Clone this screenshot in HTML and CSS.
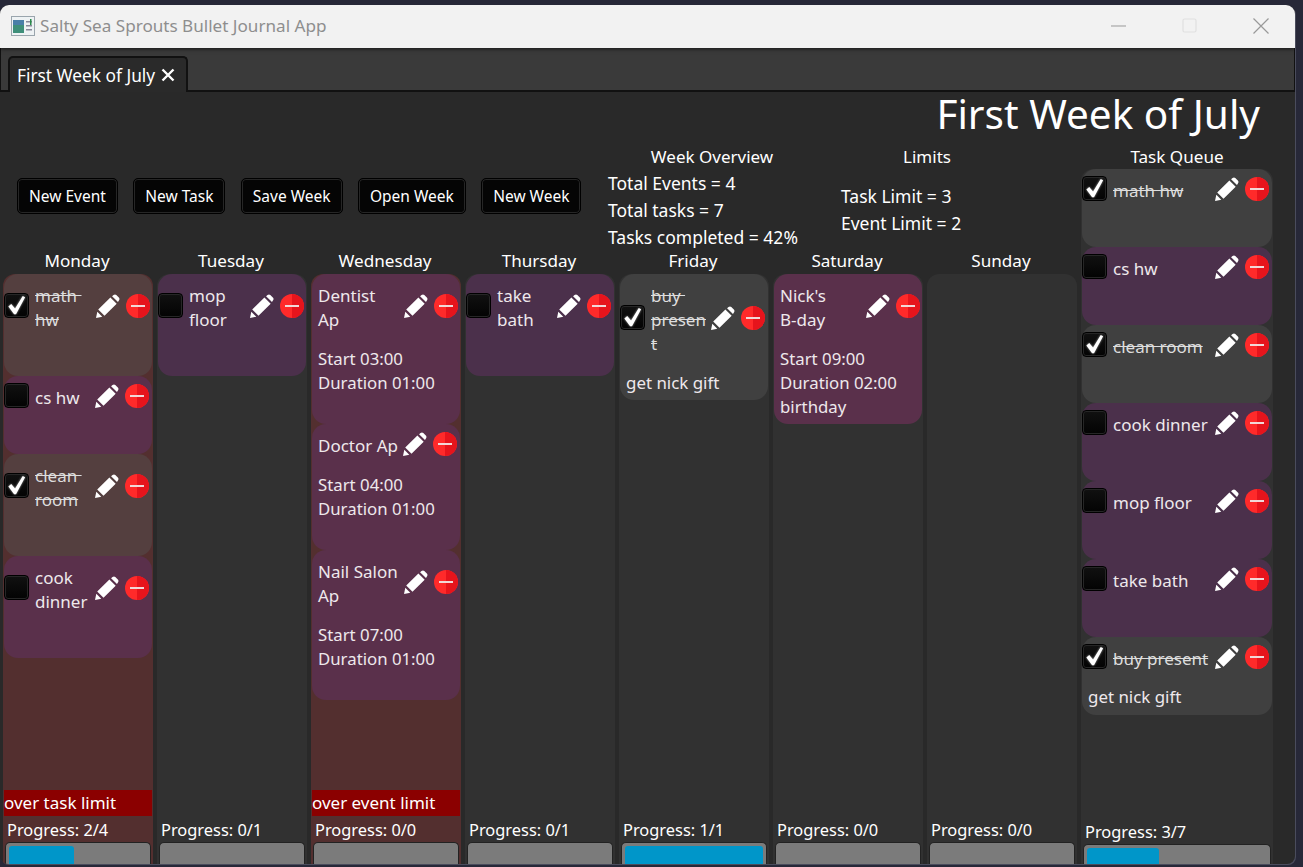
FILE: index.html
```html
<!DOCTYPE html>
<html lang="en">
<head>
<meta charset="utf-8">
<title>Salty Sea Sprouts Bullet Journal App</title>
<link rel="stylesheet" href="styles.css">
</head>
<body>
<svg class="defs" width="0" height="0" aria-hidden="true">
  <defs>
    <symbol id="pencil" viewBox="0 0 26 26">
      <path d="M0 26 L1.4 19.2 L6.8 24.6 Z M2.4 16.8 L15.6 3.8 L22.4 10.6 L9.2 23.6 Z M17.4 2.4 L19 1 Q20.6 0 22 1 L25 4 Q26 5.3 25 6.8 L23.8 8.8 Z" fill="#fff"/>
    </symbol>
    <symbol id="minus" viewBox="0 0 24 24">
      <circle cx="12" cy="12" r="12" fill="#ff2a2a"/>
      <path d="M12 0 A12 12 0 0 1 12 24 Z" fill="#e6141c"/>
      <rect x="5" y="11" width="14" height="2" fill="#f1d8d8"/>
    </symbol>
    <symbol id="tick" viewBox="0 0 24 24">
      <path d="M3.5 13 L6.5 10.5 L10.5 15 L18.5 2 L21 3.5 L11.5 21 L9.5 21 Z" fill="#fff"/>
    </symbol>
  </defs>
</svg>
<div class="window">
  <header class="titlebar">
    <svg class="appicon" width="24" height="20" viewBox="0 0 24 20"><rect x=".5" y=".5" width="23" height="19" fill="#eef2f4" stroke="#9aa5ad"/><rect x="2" y="4" width="11" height="13" fill="#3f8f7a"/><rect x="2" y="4" width="11" height="5" fill="#4a7fa8"/><rect x="15" y="5" width="6" height="1.5" fill="#889"/><rect x="15" y="9" width="6" height="1.5" fill="#889"/><rect x="15" y="13" width="6" height="1.5" fill="#889"/><rect x="19" y="3" width="1.5" height="6" fill="#2a8a4a"/></svg>
    <span class="title">Salty Sea Sprouts Bullet Journal App</span>
    <div class="winbtns">
      <svg class="winbtn" width="16" height="16" viewBox="0 0 16 16"><path d="M0 8H15" stroke="#999" stroke-width="1"/></svg>
      <svg class="winbtn" width="16" height="16" viewBox="0 0 16 16"><rect x="1" y="1" width="13" height="13" rx="1.5" fill="none" stroke="#e0e0e0" stroke-width="1.2"/></svg>
      <svg class="winbtn" width="16" height="16" viewBox="0 0 16 16"><path d="M0.5 0.5L15.5 15.5M15.5 0.5L0.5 15.5" stroke="#999" stroke-width="1.2"/></svg>
    </div>
  </header>
  <div class="tabbar">
    <div class="tab"><span>First Week of July</span><svg class="tabclose" width="14" height="14" viewBox="0 0 14 14"><path d="M1.5 1.5L12.5 12.5M12.5 1.5L1.5 12.5" stroke="#fff" stroke-width="2.4"/></svg></div>
  </div>
  <main class="content">
    <h1 class="pagetitle">First Week of July</h1>
    <section class="controls">
      <div class="buttons">
        <button class="btn">New Event</button>
        <button class="btn">New Task</button>
        <button class="btn">Save Week</button>
        <button class="btn">Open Week</button>
        <button class="btn">New Week</button>
      </div>
      <div class="overview">
        <div class="ovtitle">Week Overview</div>
        <div class="ovline">Total Events = 4</div>
        <div class="ovline">Total tasks = 7</div>
        <div class="ovline">Tasks completed = 42%</div>
      </div>
      <div class="limits">
        <div class="limtitle">Limits</div>
        <div class="ovline">Task Limit = 3</div>
        <div class="ovline">Event Limit = 2</div>
      </div>
    </section>
    <section class="board">
      <div class="daywrap">
        <div class="dayname">Monday</div>
        <div class="day over">
          <div class="items">
            <div class="card done h102 p2"><div class="row"><span class="check"><svg class="tick"><use href="#tick"/></svg></span><span class="ctext strike">math&nbsp;<br>hw</span><svg class="pencil"><use href="#pencil"/></svg><svg class="minus"><use href="#minus"/></svg></div></div>
            <div class="card task h78"><div class="row"><span class="check"></span><span class="ctext">cs hw</span><svg class="pencil"><use href="#pencil"/></svg><svg class="minus"><use href="#minus"/></svg></div></div>
            <div class="card done h102"><div class="row"><span class="check"><svg class="tick"><use href="#tick"/></svg></span><span class="ctext strike">clean&nbsp;<br>room</span><svg class="pencil"><use href="#pencil"/></svg><svg class="minus"><use href="#minus"/></svg></div></div>
            <div class="card task h102"><div class="row"><span class="check"></span><span class="ctext">cook<br>dinner</span><svg class="pencil"><use href="#pencil"/></svg><svg class="minus"><use href="#minus"/></svg></div></div>
          </div>
          <div class="warn">over task limit</div>
          <div class="progress">Progress: 2/4</div>
          <div class="bar"><div class="fill" style="width:47%"></div></div>
        </div>
      </div>
      <div class="daywrap">
        <div class="dayname">Tuesday</div>
        <div class="day">
          <div class="items">
            <div class="card task2 h102 p2"><div class="row"><span class="check"></span><span class="ctext">mop<br>floor</span><svg class="pencil"><use href="#pencil"/></svg><svg class="minus"><use href="#minus"/></svg></div></div>
          </div>
          <div class="progress">Progress: 0/1</div>
          <div class="bar"></div>
        </div>
      </div>
      <div class="daywrap">
        <div class="dayname">Wednesday</div>
        <div class="day over">
          <div class="items">
            <div class="card task ev p2"><div class="row"><span class="ctext">Dentist<br>Ap</span><svg class="pencil"><use href="#pencil"/></svg><svg class="minus"><use href="#minus"/></svg></div><div class="evinfo">Start 03:00<br>Duration 01:00</div></div>
            <div class="card task ev one"><div class="row"><span class="ctext">Doctor Ap</span><svg class="pencil"><use href="#pencil"/></svg><svg class="minus"><use href="#minus"/></svg></div><div class="evinfo">Start 04:00<br>Duration 01:00</div></div>
            <div class="card task ev p2"><div class="row"><span class="ctext">Nail Salon<br>Ap</span><svg class="pencil"><use href="#pencil"/></svg><svg class="minus"><use href="#minus"/></svg></div><div class="evinfo">Start 07:00<br>Duration 01:00</div></div>
          </div>
          <div class="warn">over event limit</div>
          <div class="progress">Progress: 0/0</div>
          <div class="bar"></div>
        </div>
      </div>
      <div class="daywrap">
        <div class="dayname">Thursday</div>
        <div class="day">
          <div class="items">
            <div class="card task2 h102"><div class="row"><span class="check"></span><span class="ctext">take<br>bath</span><svg class="pencil"><use href="#pencil"/></svg><svg class="minus"><use href="#minus"/></svg></div></div>
          </div>
          <div class="progress">Progress: 0/1</div>
          <div class="bar"></div>
        </div>
      </div>
      <div class="daywrap">
        <div class="dayname">Friday</div>
        <div class="day">
          <div class="items">
            <div class="card grey"><div class="row"><span class="check"><svg class="tick"><use href="#tick"/></svg></span><span class="ctext strike">buy&nbsp;<br>presen<br>t</span><svg class="pencil"><use href="#pencil"/></svg><svg class="minus"><use href="#minus"/></svg></div><div class="note">get nick gift</div></div>
          </div>
          <div class="progress">Progress: 1/1</div>
          <div class="bar"><div class="fill full"></div></div>
        </div>
      </div>
      <div class="daywrap">
        <div class="dayname">Saturday</div>
        <div class="day">
          <div class="items">
            <div class="card task ev p2"><div class="row"><span class="ctext">Nick's<br>B-day</span><svg class="pencil"><use href="#pencil"/></svg><svg class="minus"><use href="#minus"/></svg></div><div class="evinfo">Start 09:00<br>Duration 02:00<br>birthday</div></div>
          </div>
          <div class="progress">Progress: 0/0</div>
          <div class="bar"></div>
        </div>
      </div>
      <div class="daywrap">
        <div class="dayname">Sunday</div>
        <div class="day">
          <div class="items"></div>
          <div class="progress">Progress: 0/0</div>
          <div class="bar"></div>
        </div>
      </div>
      <div class="daywrap queue">
        <div class="dayname">Task Queue</div>
        <div class="day">
          <div class="items">
            <div class="card grey q"><div class="row"><span class="check"><svg class="tick"><use href="#tick"/></svg></span><span class="ctext strike">math hw</span><svg class="pencil"><use href="#pencil"/></svg><svg class="minus"><use href="#minus"/></svg></div></div>
            <div class="card task2 q"><div class="row"><span class="check"></span><span class="ctext">cs hw</span><svg class="pencil"><use href="#pencil"/></svg><svg class="minus"><use href="#minus"/></svg></div></div>
            <div class="card grey q"><div class="row"><span class="check"><svg class="tick"><use href="#tick"/></svg></span><span class="ctext strike">clean room</span><svg class="pencil"><use href="#pencil"/></svg><svg class="minus"><use href="#minus"/></svg></div></div>
            <div class="card task2 q"><div class="row"><span class="check"></span><span class="ctext">cook dinner</span><svg class="pencil"><use href="#pencil"/></svg><svg class="minus"><use href="#minus"/></svg></div></div>
            <div class="card task2 q"><div class="row"><span class="check"></span><span class="ctext">mop floor</span><svg class="pencil"><use href="#pencil"/></svg><svg class="minus"><use href="#minus"/></svg></div></div>
            <div class="card task2 q"><div class="row"><span class="check"></span><span class="ctext">take bath</span><svg class="pencil"><use href="#pencil"/></svg><svg class="minus"><use href="#minus"/></svg></div></div>
            <div class="card grey q"><div class="row"><span class="check"><svg class="tick"><use href="#tick"/></svg></span><span class="ctext strike">buy present</span><svg class="pencil"><use href="#pencil"/></svg><svg class="minus"><use href="#minus"/></svg></div><div class="note">get nick gift</div></div>
          </div>
          <div class="progress">Progress: 3/7</div>
          <div class="bar"><div class="fill" style="width:40%"></div></div>
        </div>
      </div>
    </section>
  </main>
</div>
</body>
</html>
```
FILE: styles.css
```css
* { box-sizing: border-box; }
html, body { margin: 0; height: 867px; overflow: hidden; }
body {
  background: #272838;
  font-family: "Noto Sans", "Open Sans", sans-serif;
  font-size: 17px;
  color: #fff;
  padding-top: 5px;
}
.defs { position: absolute; }
.window {
  width: 1295px;
  height: 859px;
  background: #292929;
  border-radius: 9px 9px 8px 8px;
  box-shadow: 1px 1px 0 #4a4c5c;
  display: flex;
  flex-direction: column;
  overflow: hidden;
}
.titlebar {
  height: 43px;
  flex: none;
  background: #f2f2f2;
  display: flex;
  align-items: center;
  padding: 0 0 2px 11px;
  box-shadow: 0 1px 4px rgba(0,0,0,.6);
  position: relative;
  z-index: 1;
}
.appicon { margin-right: 5px; }
.title { color: #8e8e8e; font-size: 17.1px; }
.winbtns { margin-left: auto; display: flex; gap: 55px; padding-right: 26px; }
.tabbar {
  height: 44px;
  flex: none;
  background: #3a3a3a;
  border: 1px solid #111;
  border-width: 0 1px 2px;
  padding: 8px 0 0 7px;
  display: flex;
}
.tab {
  height: 36px;
  width: 180px;
  background: #2a2a2a;
  border: 2px solid #111;
  border-bottom: 0;
  border-radius: 5px 5px 0 0;
  display: flex;
  align-items: center;
  gap: 6px;
  padding-left: 7px;
  font-size: 17.3px;
}
.content { flex: 1; min-height: 0; display: flex; flex-direction: column; }
.pagetitle {
  margin: 0;
  height: 44px;
  font-size: 40.5px;
  line-height: 44px;
  font-weight: 400;
  text-align: right;
  padding-right: 35px;
  flex: none;
}
.controls { height: 111px; flex: none; display: flex; padding-top: 8px; }
.buttons { width: 608px; display: flex; gap: 15.4px; padding: 34px 0 0 17px; flex: none; align-items: flex-start; }
.btn {
  height: 36px;
  background: #050505;
  border: 1px solid #000;
  box-shadow: inset 0 0 0 1px #262626;
  border-radius: 5px;
  color: #fff;
  font: inherit;
  font-size: 15.5px;
  padding: 0 11px;
  white-space: nowrap;
}
.overview { width: 233px; flex: none; font-size: 17.5px; }
.ovtitle { width: 208px; text-align: center; height: 26px; line-height: 26px; font-size: 17px; }
.ovline { height: 27px; line-height: 26px; }
.limits { width: 200px; flex: none; font-size: 17.5px; }
.limtitle { width: 172px; text-align: center; height: 39px; line-height: 26px; font-size: 17px; }
.board { flex: 1; min-height: 0; display: flex; gap: 4px; padding-left: 3px; }
.daywrap { width: 150px; flex: none; display: flex; flex-direction: column; }
.queue { width: 192px; margin-top: -104px; }
.dayname { height: 27px; line-height: 27px; text-align: center; flex: none; font-size: 17.1px; padding-right: 2px; }
.queue .dayname { height: 26px; padding-right: 0; }
.day {
  flex: 1;
  min-height: 0;
  background: #313131;
  border-radius: 12px 12px 0 0;
  display: flex;
  flex-direction: column;
}
.day.over { background: #532f2f; }
.items { flex: 1; min-height: 0; display: flex; flex-direction: column; }
.card { border-radius: 14px; margin: 0 1px; padding-right: 3px; flex: none; color: #eee8ec; }
.p2 { padding-right: 2px; }
.h102 { height: 102px; }
.h78 { height: 78px; }
.task { background: #5a304b; }
.task2 { background: #4b304b; }
.grey { background: #404040; }
.done { background: #543f3f; }
.row { display: flex; align-items: center; padding-top: 5px; }
.check {
  width: 25px;
  height: 25px;
  flex: none;
  background: linear-gradient(#111, #030303);
  border: 1px solid #000;
  box-shadow: inset 0 0 0 1px #262626;
  border-radius: 4px;
}
.tick { width: 23px; height: 23px; display: block; filter: drop-shadow(0 0 1px #999); }
.ctext { line-height: 24px; margin-left: 6px; padding-top: 5px; flex: 1; min-width: 0; white-space: nowrap; }
.strike { text-decoration: line-through; color: #ddd; }
.pencil { width: 24px; height: 24px; margin-right: 6px; flex: none; }
.minus { width: 24px; height: 24px; flex: none; }
.evinfo { line-height: 24px; padding: 15px 0 0 6px; font-size: 16.8px; }
.ev { height: 150px; }
.ev.one { height: 126px; }
.note { line-height: 24px; padding: 15px 0 5px 6px; font-size: 16.9px; }
.q { height: 78px; }
.q .note { padding-top: 14px; }
.warn {
  height: 26px;
  line-height: 26px;
  background: #8b0000;
  flex: none;
  margin: 0 1px;
}
.progress { height: 27px; line-height: 28px; padding-left: 4px; flex: none; font-size: 16.4px; }
.queue .progress { height: 28px; line-height: 30px; }
.bar {
  height: 22px;
  margin-top: -1px;
  flex: none;
  margin-left: 2px;
  margin-right: 2px;
  background: #7b7b7b;
  border: 1px solid #222;
  border-bottom: 0;
  border-radius: 5px 5px 0 0;
  padding: 3px 3px 0;
}
.queue .bar { height: 20px; }
.fill { height: 100%; background: #0096c9; border-radius: 3px 3px 0 0; }
.full { width: 100%; }
```
